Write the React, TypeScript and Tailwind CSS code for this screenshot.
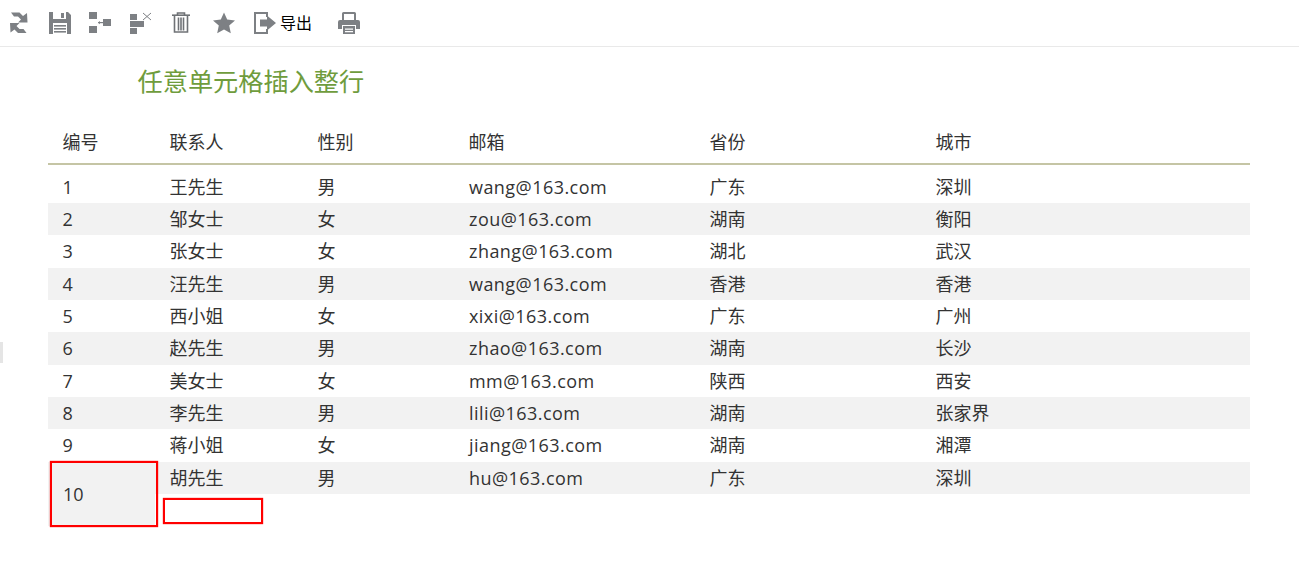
const ROWS = [
  ['1', '王先生', '男', 'wang@163.com', '广东', '深圳'],
  ['2', '邹女士', '女', 'zou@163.com', '湖南', '衡阳'],
  ['3', '张女士', '女', 'zhang@163.com', '湖北', '武汉'],
  ['4', '汪先生', '男', 'wang@163.com', '香港', '香港'],
  ['5', '西小姐', '女', 'xixi@163.com', '广东', '广州'],
  ['6', '赵先生', '男', 'zhao@163.com', '湖南', '长沙'],
  ['7', '美女士', '女', 'mm@163.com', '陕西', '西安'],
  ['8', '李先生', '男', 'lili@163.com', '湖南', '张家界'],
  ['9', '蒋小姐', '女', 'jiang@163.com', '湖南', '湘潭'],
]

const HEADERS = ['编号', '联系人', '性别', '邮箱', '省份', '城市']
const WIDTHS = ['w-[107px]', 'w-[148px]', 'w-[151px]', 'w-[241px]', 'w-[226px]', 'w-[329px]']

function RefreshIcon() {
  return (
    <svg width="22" height="22" viewBox="0 0 22 22" className="fill-[#7d8084]">
      <path d="M2 0.5 H10.5 L14 4 L18 1 L18.5 10.5 L9 10.5 L12 7.5 L9 4.5 H5 Z" />
      <path d="M17.5 21 H9 L5.5 17.5 L1.5 20.5 L1 11 L10.5 11 L7.5 14 L10.5 17 H14.5 Z" />
    </svg>
  )
}

function SaveIcon() {
  return (
    <svg width="22" height="22" viewBox="0 0 22 22" className="fill-[#7d8084]">
      <path fillRule="evenodd" d="M0 0H4V7H17V0H19L22 3V22H0ZM4 11V22H18V11Z" />
      <rect x="12" y="1" width="3" height="5" />
      <rect x="5" y="13" width="12" height="1.6" />
      <rect x="5" y="16" width="12" height="1.6" />
      <rect x="5" y="19" width="12" height="1.6" />
    </svg>
  )
}

function TreeIcon() {
  return (
    <svg width="22" height="22" viewBox="0 0 22 22" className="fill-[#7d8084]">
      <rect x="0" y="0" width="8" height="7" />
      <rect x="0" y="14" width="8" height="7" />
      <rect x="14" y="7" width="8" height="7" />
      <rect x="9" y="10" width="5" height="1.2" />
      <path d="M9 10.6 L11 9 V12.2 Z" />
    </svg>
  )
}

function TreeRemoveIcon() {
  return (
    <svg width="22" height="22" viewBox="0 0 22 22" className="fill-[#7d8084]">
      <rect x="0" y="2" width="7" height="6" />
      <rect x="0" y="9" width="14" height="6" />
      <rect x="0" y="16" width="7" height="6" />
      <path d="M13 1 L21 8 M21 1 L13 8" className="fill-none stroke-[#7d8084]" strokeWidth="1" />
    </svg>
  )
}

function TrashIcon() {
  return (
    <svg width="18" height="21" viewBox="0 0 18 21" className="fill-none stroke-[#6f7276]" strokeWidth="1.6">
      <path d="M0 3.2H18" />
      <path d="M5.5 3V1H12.5V3" />
      <path d="M2.5 3.5V20H15.5V3.5" />
      <path d="M6.5 5.5V18.5M9 5.5V18.5M11.5 5.5V18.5" />
    </svg>
  )
}

function StarIcon() {
  return (
    <svg width="22" height="22" viewBox="0 0 22 22" className="fill-[#7d8084]">
      <path d="M11 0.5 L14.2 7.6 L22 8.4 L16.2 13.6 L17.8 21.3 L11 17.4 L4.2 21.3 L5.8 13.6 L0 8.4 L7.8 7.6 Z" />
    </svg>
  )
}

function ExportIcon() {
  return (
    <svg width="22" height="22" viewBox="0 0 22 22" className="fill-[#7d8084]">
      <path d="M0 0H14V5H12V2H2V20H12V17H14V22H0Z" />
      <path d="M6 7.5H13V3.5L22 11L13 18.5V14.5H6Z" />
    </svg>
  )
}

function PrinterIcon() {
  return (
    <svg width="22" height="22" viewBox="0 0 22 22" className="fill-[#7d8084]">
      <path fillRule="evenodd" d="M4 1.5 Q4 0 5.5 0 H16.5 Q18 0 18 1.5 V8 H16 V2 H6 V8 H4Z" />
      <path fillRule="evenodd" d="M2 8 H20 Q22 8 22 10 V17 H18 V13 H4 V17 H0 V10 Q0 8 2 8Z" />
      <path fillRule="evenodd" d="M5 14 H17 V22 H5ZM7 16.5 V17.8 H15 V16.5ZM7 19 V20.2 H15 V19Z" />
    </svg>
  )
}

export default function App() {
  return (
    <div className="relative h-[561px] w-[1299px] overflow-hidden bg-white text-[#333] font-['Open_Sans','Noto_Sans_CJK_SC',sans-serif]">
      {/* toolbar */}
      <div className="flex h-[47px] items-center border-b border-[#e9e9e9] pl-[9px] pb-[1px]">
        <span className="mr-[18px]"><RefreshIcon /></span>
        <span className="mr-[18px]"><SaveIcon /></span>
        <span className="mr-[19px]"><TreeIcon /></span>
        <span className="mr-[21px]"><TreeRemoveIcon /></span>
        <span className="mr-[23px] -ml-[1px]"><TrashIcon /></span>
        <span className="mr-[19px]"><StarIcon /></span>
        <ExportIcon />
        <span className="ml-[4px] mr-[26px] mt-[1px] text-[16px] text-black">导出</span>
        <PrinterIcon />
      </div>

      <h1 className="pl-[137.5px] pt-[17px] text-[25.2px] leading-[34px] font-normal text-[#6f9c3d]">任意单元格插入整行</h1>

      <table className="ml-[48px] mt-[25px] w-[1202px] table-fixed border-collapse text-[18px]">
        <thead>
          <tr className="h-[41px] border-b-2 border-[#c5c5a5]">
            {HEADERS.map((h, i) => (
              <th key={h} className={`${WIDTHS[i]} pl-[14.5px] pb-[1px] text-left font-normal`}>{h}</th>
            ))}
          </tr>
        </thead>
        <tbody>
          <tr className="h-[6.67px]"><td colSpan={6} className="p-0" /></tr>
          {ROWS.map((row, i) => (
            <tr key={row[0]} className={i % 2 === 1 ? 'h-[32.33px] bg-[#f2f2f2]' : 'h-[32.33px]'}>
              {row.map((c, j) => (
                <td key={j} className={j === 3 ? 'p-0 pl-[15px] leading-[24px] tracking-[0.45px]' : 'p-0 pl-[14.5px] leading-[24px]'}>{c}</td>
              ))}
            </tr>
          ))}
          <tr className="h-[32.33px] bg-[#f2f2f2]">
            <td rowSpan={2} className="relative p-0 pl-[15px] pt-[1px]">
              10
              <div className="absolute left-[2px] right-[-3px] top-[-1px] bottom-[-1px] border-2 border-[#f00] shadow-[0_0_1px_#f00]" />
            </td>
            <td className="p-0 pl-[14.5px] pt-[1px] leading-[24px]">胡先生</td>
            <td className="p-0 pl-[14.5px] pt-[1px] leading-[24px]">男</td>
            <td className="p-0 pl-[15px] pt-[1px] leading-[24px] tracking-[0.45px]">hu@163.com</td>
            <td className="p-0 pl-[14.5px] pt-[1px] leading-[24px]">广东</td>
            <td className="p-0 pl-[14.5px] pt-[1px] leading-[24px]">深圳</td>
          </tr>
          <tr className="h-[32px]">
            <td className="p-0 pl-[8px] pt-[4px] align-top">
              <div className="h-[26px] w-[100px] border-2 border-[#f00] shadow-[0_0_1px_#f00]" />
            </td>
            <td colSpan={4} className="p-0" />
          </tr>
        </tbody>
      </table>

      {/* scroll handle at left edge */}
      <div className="absolute left-0 top-[342px] h-[21px] w-[3px] bg-[#e5e5e5]" />
    </div>
  )
}
